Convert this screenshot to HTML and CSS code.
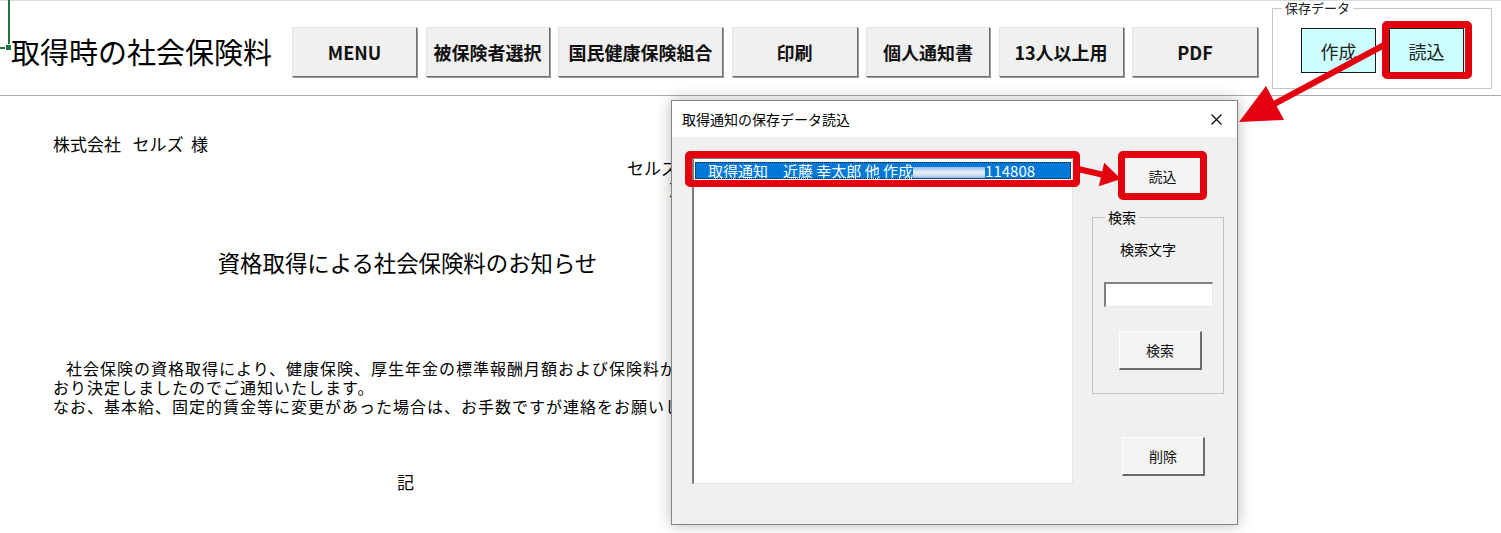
FILE: index.html
```html
<!DOCTYPE html>
<html lang="ja">
<head>
    <meta charset="UTF-8">
    <title>取得時の社会保険料</title>
    <link rel="stylesheet" href="styles.css">
</head>
<body>
<div class="page">
    <!-- シート上部の操作エリア -->
    <header class="ribbon">
        <span class="cell-mark"></span>
        <h1 class="sheet-title">取得時の社会保険料</h1>
        <nav class="menu">
            <button class="menu-btn w-menu">MENU</button>
            <button class="menu-btn w-insured">被保険者選択</button>
            <button class="menu-btn w-union">国民健康保険組合</button>
            <button class="menu-btn w-print">印刷</button>
            <button class="menu-btn w-notice">個人通知書</button>
            <button class="menu-btn w-large">13人以上用</button>
            <button class="menu-btn w-pdf">PDF</button>
        </nav>
        <fieldset class="save-group">
            <legend>保存データ</legend>
            <div class="save-btns">
                <button class="save-btn">作成</button>
                <button class="save-btn marked">読込</button>
            </div>
        </fieldset>
    </header>

    <!-- 通知書本文 -->
    <main class="doc">
        <div class="addressee">株式会社   セルズ  様</div>
        <div class="sender">
            <div>セルズ株式会社</div>
            <div class="sender-sub">東京都千代田区</div>
        </div>
        <h2 class="notice-title">資格取得による社会保険料のお知らせ</h2>
        <div class="body-text">
            <div class="indent">社会保険の資格取得により、健康保険、厚生年金の標準報酬月額および保険料が下記のと</div>
            <div>おり決定しましたのでご通知いたします。</div>
            <div>なお、基本給、固定的賃金等に変更があった場合は、お手数ですが連絡をお願いします。</div>
        </div>
        <div class="ki">記</div>
    </main>

    <!-- 保存データ読込フォーム -->
    <div class="dialog">
        <div class="dlg-head">
            <span>取得通知の保存データ読込</span>
            <svg class="dlg-close" width="11" height="11" viewBox="0 0 11 11">
                <path d="M0.5 0.5 L10.5 10.5 M10.5 0.5 L0.5 10.5" stroke="#000" stroke-width="1.1" fill="none"/>
            </svg>
        </div>
        <div class="dlg-body">
            <div class="listbox">
                <div class="row marked-row">取得通知　近藤 幸太郎 他 作成<span class="smudge"></span>114808</div>
            </div>
            <div class="dlg-side">
                <button class="dlg-btn btn-read">読込</button>
                <fieldset class="search-group">
                    <legend>検索</legend>
                    <div class="search-label">検索文字</div>
                    <input class="search-box" type="text">
                    <button class="dlg-btn btn-search">検索</button>
                </fieldset>
                <button class="dlg-btn btn-delete">削除</button>
            </div>
        </div>
    </div>

    <!-- 説明用の矢印 -->
    <svg class="callouts" width="1501" height="533" viewBox="0 0 1501 533">
        <line x1="1386" y1="44" x2="1276" y2="103" stroke="#e3000f" stroke-width="6" stroke-linecap="round"/>
        <polygon points="1239,122 1284,120 1266,86" fill="#e3000f"/>
        <line x1="1078" y1="169" x2="1102" y2="174.5" stroke="#e3000f" stroke-width="6" stroke-linecap="round"/>
        <polygon points="1121,179 1098.8,186.2 1104.2,162.8" fill="#e3000f"/>
    </svg>
</div>
</body>
</html>
```

FILE: styles.css
```css
* {
    box-sizing: border-box;
}

body {
    margin: 0;
    background: #fff;
    color: #000;
    font-family: "Noto Sans CJK JP", sans-serif;
    overflow: hidden;
}

.page {
    position: relative;
    width: 1501px;
    height: 533px;
}

/* 上部の操作エリア */
.ribbon {
    position: relative;
    display: flex;
    align-items: flex-start;
    height: 96px;
    padding-left: 11px;
    border-top: 1px solid #dcdcdc;
    border-bottom: 1px solid #ababab;
}

.cell-mark {
    position: absolute;
    left: 0;
    top: -1px;
    width: 10px;
    height: 49px;
    border-right: 2px solid #217346;
    border-bottom: 2px solid #217346;
}

.cell-mark::after {
    content: "";
    position: absolute;
    right: -4px;
    bottom: -4px;
    width: 5px;
    height: 5px;
    background: #217346;
    border: 1px solid #fff;
}

.sheet-title {
    width: 281px;
    margin: 34px 0 0;
    font-size: 29px;
    font-weight: 400;
    line-height: 32px;
    white-space: nowrap;
}

.menu {
    display: flex;
    gap: 8.5px;
    margin-top: 26px;
}

.menu-btn {
    height: 50px;
    padding: 0;
    background: #f0f0f0;
    border: 1px solid;
    border-color: #e4e4e4 #6f6f6f #6f6f6f #e4e4e4;
    box-shadow: 1px 1px 0 #9a9a9a;
    color: #111;
    font-family: "Noto Sans CJK JP", sans-serif;
    font-size: 18px;
    font-weight: 700;
}

.w-menu { width: 125px; }
.w-insured { width: 124px; }
.w-union { width: 165px; }
.w-print { width: 126px; }
.w-notice { width: 124px; }
.w-large { width: 125px; }
.w-pdf { width: 126px; }

.save-group {
    width: 220px;
    height: 88px;
    margin: 0 0 0 14px;
    padding: 0;
    border: 1px solid #c6c6c6;
}

.save-group legend {
    margin-left: 9px;
    padding: 0 3px;
    font-size: 13px;
    line-height: 14px;
    color: #222;
}

.save-btns {
    display: flex;
    gap: 13px;
    margin: 13px 0 0 28px;
}

.save-btn {
    width: 75px;
    height: 45px;
    padding: 0;
    background: #ccffff;
    border: 1px solid #1a1a1a;
    color: #222;
    font-family: "Noto Sans CJK JP", sans-serif;
    font-size: 18px;
}

.marked {
    position: relative;
}

.marked::after {
    content: "";
    position: absolute;
    left: -8px;
    right: -9px;
    top: -8px;
    bottom: -7px;
    border: 7px solid #e3000f;
    border-radius: 5px;
}

/* 通知書本文 */
.doc {
    padding-left: 53px;
    font-size: 17px;
}

.addressee {
    margin-top: 38px;
    line-height: 20px;
    white-space: pre;
}

.sender {
    margin: 3px 0 0 574px;
    line-height: 21px;
    white-space: nowrap;
}

.sender-sub {
    padding-left: 42px;
}

.notice-title {
    width: 709px;
    margin: 48px 0 0;
    font-size: 22.4px;
    font-weight: 400;
    line-height: 30px;
    text-align: center;
}

.body-text {
    margin-top: 82px;
    font-size: 16px;
    letter-spacing: 1px;
    line-height: 19px;
    white-space: nowrap;
}

.indent {
    padding-left: 13px;
}

.ki {
    width: 705px;
    margin-top: 56px;
    line-height: 20px;
    text-align: center;
}

/* 読込フォーム */
.dialog {
    position: absolute;
    left: 671px;
    top: 100px;
    width: 567px;
    height: 425px;
    display: flex;
    flex-direction: column;
    background: #f0f0f0;
    border: 1px solid #858585;
    box-shadow: 0 0 14px rgba(0, 0, 0, 0.28);
    font-size: 14px;
}

.dlg-head {
    height: 36px;
    display: flex;
    align-items: center;
    justify-content: space-between;
    padding: 0 15px 0 10px;
    background: #fff;
}

.dlg-body {
    flex: 1;
    display: flex;
    gap: 19px;
    padding: 20px 0 0 20px;
}

.listbox {
    width: 381px;
    height: 327px;
    padding: 3px 1px 0 1px;
    background: #fff;
    border-style: solid;
    border-width: 2px 1px 1px 2px;
    border-color: #7c7c7c #e3e3e3 #e3e3e3 #7c7c7c;
}

.row {
    position: relative;
    height: 17px;
    padding-left: 13px;
    background: #0078d7;
    color: #fff;
    font-size: 15px;
    line-height: 17px;
    white-space: pre;
    outline: 1px dotted #1b1b1b;
    outline-offset: -1px;
}

.marked-row::after {
    content: "";
    position: absolute;
    left: -10px;
    right: -9px;
    top: -11px;
    bottom: -8px;
    border: 7px solid #e3000f;
    border-radius: 5px;
}

.smudge {
    display: inline-block;
    width: 72px;
    height: 11px;
    vertical-align: -1px;
    background: linear-gradient(#8fbbe6, #e6eff8 45%, #d8e6f4 70%, #8fbbe6);
}

.dlg-side {
    width: 132px;
    display: flex;
    flex-direction: column;
    align-items: flex-start;
}

.dlg-btn {
    padding: 0;
    background: #f4f4f4;
    border-style: solid;
    border-width: 1px 2px 2px 1px;
    border-color: #fff #6b6b6b #6b6b6b #fff;
    color: #111;
    font-family: "Noto Sans CJK JP", sans-serif;
    font-size: 14px;
}

.btn-read {
    position: relative;
    width: 82px;
    height: 42px;
    margin: -2px 0 0 30px;
}

.btn-read::after {
    content: "";
    position: absolute;
    inset: -5px;
    border: 7px solid #e3000f;
    border-radius: 5px;
}

.search-group {
    width: 132px;
    height: 185px;
    margin: 12px 0 0;
    padding: 0;
    border: 1px solid #c4c4c4;
}

.search-group legend {
    margin-left: 12px;
    padding: 0 3px;
    line-height: 16px;
}

.search-label {
    margin: 15px 0 0 27px;
    line-height: 18px;
}

.search-box {
    display: block;
    width: 109px;
    height: 25px;
    margin: 24px 0 0 11px;
    background: #fff;
    border-style: solid;
    border-width: 2px 1px 1px 2px;
    border-color: #808080 #e6e6e6 #e6e6e6 #808080;
}

.btn-search {
    width: 83px;
    height: 39px;
    margin: 24px 0 0 26px;
}

.btn-delete {
    width: 83px;
    height: 39px;
    margin: 43px 0 0 30px;
}

.callouts {
    position: absolute;
    left: 0;
    top: 0;
    pointer-events: none;
}
```
